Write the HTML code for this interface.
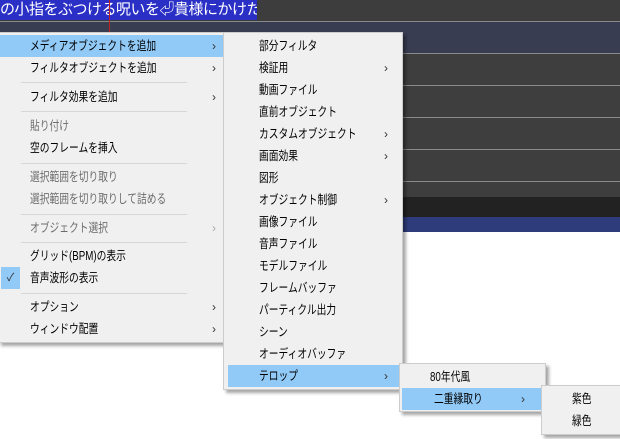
<!DOCTYPE html>
<html><head><meta charset="utf-8"><style>
*{margin:0;padding:0;box-sizing:border-box}
body{width:620px;height:439px;overflow:hidden;background:#fff;position:relative;font-family:"Liberation Sans","Noto Sans CJK JP",sans-serif;font-size:12px;color:#000}
.a{position:absolute}
.m{position:absolute;background:#f0f0f0;border:1px solid #ccc;box-shadow:3px 3px 3px rgba(0,0,0,.35)}
.i{position:absolute;height:22px;line-height:22px;white-space:nowrap;font-size:12.5px;transform:scaleX(.78);transform-origin:0 0}
.hl{position:absolute;height:22px;background:#91c9f7}
.g{color:#6d6d6d}
.r{position:absolute;top:0;font-size:12px;color:#333}
.s{position:absolute;height:1px;background:#d7d7d7}
</style></head><body>
<div class="a" style="left:0;top:0;width:620px;height:21px;background:#3d3d3d"></div>
<div class="a" style="left:0;top:0;width:257px;height:20px;background:#2a2fc6;color:#fff;font-size:15px;letter-spacing:-0.5px;line-height:20px;white-space:nowrap;overflow:hidden">の小指をぶつける呪いを⏎貴様にかけた</div>
<div class="a" style="left:0;top:21px;width:620px;height:1px;background:#888"></div>
<div class="a" style="left:0;top:22px;width:620px;height:31px;background:#393d52"></div>
<div class="a" style="left:0;top:53px;width:620px;height:145px;background:#3e3e3e"></div>
<div class="a" style="left:0;top:53px;width:620px;height:1px;background:#8a8a8a"></div>
<div class="a" style="left:0;top:85px;width:620px;height:1px;background:#8a8a8a"></div>
<div class="a" style="left:0;top:117px;width:620px;height:1px;background:#8a8a8a"></div>
<div class="a" style="left:0;top:149px;width:620px;height:1px;background:#8a8a8a"></div>
<div class="a" style="left:0;top:181px;width:620px;height:1px;background:#8a8a8a"></div>
<div class="a" style="left:0;top:197px;width:620px;height:20px;background:#222"></div>
<div class="a" style="left:0;top:217px;width:620px;height:15px;background:#2f3c7c"></div>
<div class="a" style="left:109px;top:0;width:1px;height:32px;background:#c02020"></div>

<div class="m" style="left:-2px;top:32px;width:228px;height:311px">
<div class="hl" style="top:2px;left:0;right:2px"></div>
<div class="i" style="top:2px;left:31px">メディアオブジェクトを追加</div><div class="r" style="left:213px;top:2px;line-height:22px">›</div>
<div class="i" style="top:24px;left:31px">フィルタオブジェクトを追加</div><div class="r" style="left:213px;top:24px;line-height:22px">›</div>
<div class="s" style="left:22px;right:38px;top:49px"></div>
<div class="i" style="top:53px;left:31px">フィルタ効果を追加</div><div class="r" style="left:213px;top:53px;line-height:22px">›</div>
<div class="s" style="left:22px;right:38px;top:78px"></div>
<div class="i g" style="top:82px;left:31px">貼り付け</div>
<div class="i" style="top:104px;left:31px">空のフレームを挿入</div>
<div class="s" style="left:22px;right:38px;top:130px"></div>
<div class="i g" style="top:133px;left:31px">選択範囲を切り取り</div>
<div class="i g" style="top:155px;left:31px">選択範囲を切り取りして詰める</div>
<div class="s" style="left:22px;right:38px;top:181px"></div>
<div class="i g" style="top:184px;left:31px">オブジェクト選択</div><div class="r g" style="left:213px;top:184px;line-height:22px;color:#aaa">›</div>
<div class="s" style="left:22px;right:38px;top:209px"></div>
<div class="i" style="top:212px;left:31px">グリッド(BPM)の表示</div>
<div class="a" style="left:2px;top:234px;width:19px;height:22px;background:#91c9f7;text-align:center;line-height:22px;font-size:11px;color:#333">✓</div>
<div class="i" style="top:234px;left:31px">音声波形の表示</div>
<div class="s" style="left:22px;right:38px;top:260px"></div>
<div class="i" style="top:263px;left:31px">オプション</div><div class="r" style="left:213px;top:263px;line-height:22px">›</div>
<div class="i" style="top:285px;left:31px">ウィンドウ配置</div><div class="r" style="left:213px;top:285px;line-height:22px">›</div>
</div>

<div class="m" style="left:223px;top:32px;width:180px;height:358px">
<div class="i" style="top:2px;left:35px">部分フィルタ</div>
<div class="i" style="top:24px;left:35px">検証用</div><div class="r" style="left:160px;top:24px;line-height:22px">›</div>
<div class="i" style="top:46px;left:35px">動画ファイル</div>
<div class="i" style="top:68px;left:35px">直前オブジェクト</div>
<div class="i" style="top:90px;left:35px">カスタムオブジェクト</div><div class="r" style="left:160px;top:90px;line-height:22px">›</div>
<div class="i" style="top:112px;left:35px">画面効果</div><div class="r" style="left:160px;top:112px;line-height:22px">›</div>
<div class="i" style="top:134px;left:35px">図形</div>
<div class="i" style="top:156px;left:35px">オブジェクト制御</div><div class="r" style="left:160px;top:156px;line-height:22px">›</div>
<div class="i" style="top:178px;left:35px">画像ファイル</div>
<div class="i" style="top:200px;left:35px">音声ファイル</div>
<div class="i" style="top:222px;left:35px">モデルファイル</div>
<div class="i" style="top:244px;left:35px">フレームバッファ</div>
<div class="i" style="top:266px;left:35px">パーティクル出力</div>
<div class="i" style="top:288px;left:35px">シーン</div>
<div class="i" style="top:310px;left:35px">オーディオバッファ</div>
<div class="hl" style="top:332px;left:4px;right:2px"></div>
<div class="i" style="top:332px;left:35px">テロップ</div><div class="r" style="left:160px;top:332px;line-height:22px">›</div>
</div>

<div class="m" style="left:399px;top:363px;width:147px;height:49px">
<div class="i" style="top:2px;left:30px">80年代風</div>
<div class="hl" style="top:24px;left:2px;right:2px"></div>
<div class="i" style="top:24px;left:34px">二重縁取り</div><div class="r" style="left:121px;top:24px;line-height:22px">›</div>
</div>

<div class="m" style="left:541px;top:385px;width:85px;height:50px">
<div class="i" style="top:2px;left:30px">紫色</div>
<div class="i" style="top:24px;left:30px">緑色</div>
</div>
</body></html>
